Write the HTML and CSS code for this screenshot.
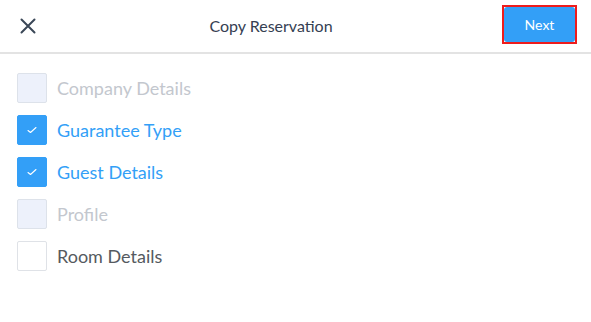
FILE: index.html
```html
<!DOCTYPE html>
<html lang="en">
<head>
  <meta charset="UTF-8" />
  <title>Copy Reservation</title>
  <link rel="stylesheet" href="styles.css">
</head>
<body>
  <header class="top-bar">
    <button class="close-btn" aria-label="Close">
      <svg width="16" height="16" viewBox="0 0 16 16">
        <path d="M1.5 1.5 L14.5 14.5 M14.5 1.5 L1.5 14.5" stroke="#3a4757" stroke-width="2" stroke-linecap="round" fill="none" />
      </svg>
    </button>
    <h1 class="title">Copy Reservation</h1>
    <div class="next-wrap">
      <button class="next-btn">Next</button>
    </div>
  </header>

  <main class="options">
    <label class="option disabled">
      <span class="box"></span>
      <span class="label">Company Details</span>
    </label>
    <label class="option checked">
      <span class="box">
        <svg width="10" height="8" viewBox="0 0 10 8"><path d="M1 4.5 L3.5 6.5 L9 1.5" stroke="#fff" stroke-width="1.1" fill="none" stroke-linecap="round" stroke-linejoin="round" /></svg>
      </span>
      <span class="label">Guarantee Type</span>
    </label>
    <label class="option checked">
      <span class="box">
        <svg width="10" height="8" viewBox="0 0 10 8"><path d="M1 4.5 L3.5 6.5 L9 1.5" stroke="#fff" stroke-width="1.1" fill="none" stroke-linecap="round" stroke-linejoin="round" /></svg>
      </span>
      <span class="label">Guest Details</span>
    </label>
    <label class="option disabled">
      <span class="box"></span>
      <span class="label">Profile</span>
    </label>
    <label class="option">
      <span class="box"></span>
      <span class="label">Room Details</span>
    </label>
  </main>
</body>
</html>
```

FILE: styles.css
```css
:root {
  --blue: #339ff7;
  --text-dark: #354052;
  --text-gray: #555a60;
  --text-disabled: #c3c7ce;
  --line: #e3e3e3;
  --font-family: 'Lato', 'Liberation Sans', sans-serif;
}

body {
  margin: 0;
  font-family: var(--font-family);
  background: #fff;
}

.top-bar {
  display: flex;
  align-items: center;
  justify-content: space-between;
  height: 52px;
  padding: 0 14px 0 20px;
  border-bottom: 2px solid var(--line);
}

.close-btn {
  display: flex;
  background: none;
  border: none;
  padding: 0;
  cursor: pointer;
}

.title {
  flex: 1;
  margin: 0 0 2px 0;
  padding-left: 4px;
  text-align: center;
  font-size: 16px;
  font-weight: 400;
  color: var(--text-dark);
}

.next-wrap {
  display: flex;
  border: 2px solid #ee1c1c;
  margin-bottom: 3px;
}

.next-btn {
  width: 71px;
  height: 35px;
  background: var(--blue);
  color: #fff;
  font-family: var(--font-family);
  font-size: 14px;
  border: none;
  border-radius: 3px;
  cursor: pointer;
}

.options {
  display: flex;
  flex-direction: column;
  gap: 12px;
  padding: 19px 17px;
}

.option {
  display: flex;
  align-items: center;
  gap: 10px;
  cursor: pointer;
}

.box {
  box-sizing: border-box;
  width: 30px;
  height: 30px;
  border: 1px solid #dfe2e7;
  border-radius: 2px;
  background: #fff;
  display: flex;
  align-items: center;
  justify-content: center;
}

.label {
  font-size: 18px;
  color: var(--text-gray);
}

.option.disabled .box {
  background: #edf1fb;
  border-color: #dde2ea;
}

.option.disabled .label {
  color: var(--text-disabled);
}

.option.checked .box {
  background: var(--blue);
  border-color: var(--blue);
}

.option.checked .label {
  color: var(--blue);
}
```
